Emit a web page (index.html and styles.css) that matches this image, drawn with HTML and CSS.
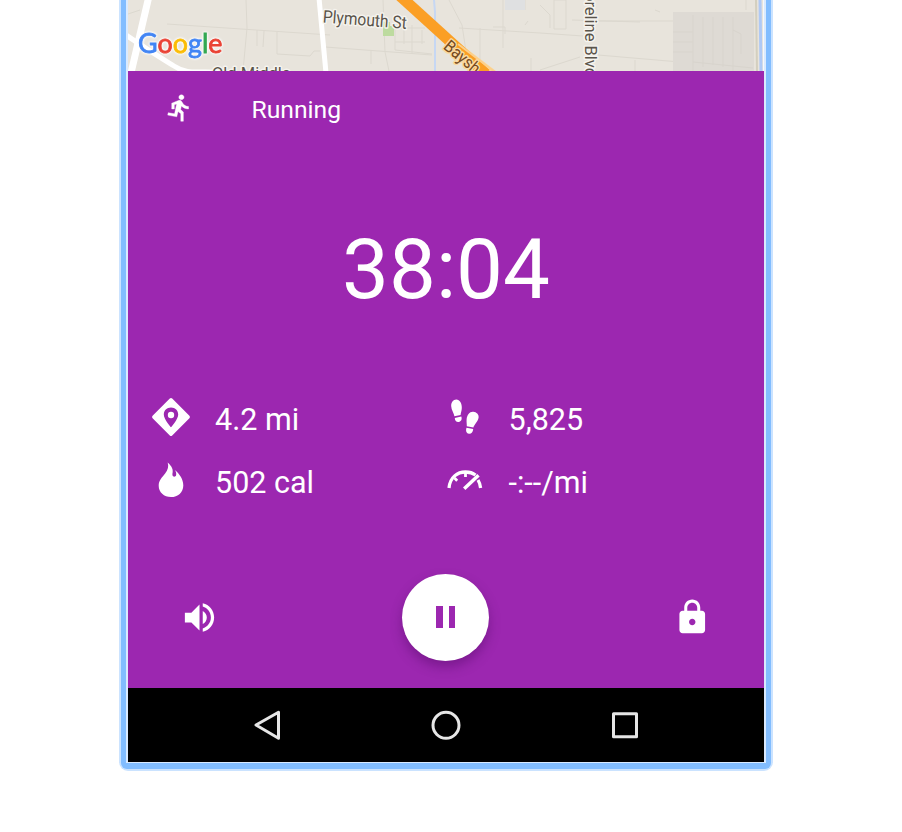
FILE: index.html
```html
<!DOCTYPE html>
<html lang="en">
<head>
<meta charset="utf-8">
<title>Running</title>
<link rel="stylesheet" href="styles.css">
</head>
<body>
<main class="frame">
  <div class="screen">
    <svg class="map" viewBox="128 0 636 71" width="636" height="71">
      <rect x="128" width="636" height="71" fill="#e8e4dc"/>
      <g fill="none" stroke="#dcd8cf" stroke-width="1">
        <path d="M167 24L330 35M246 0L247 28L243 71M257 30v16M264 31l-1 16M277 32v22l33 2 4-5h6M128 14l12-4M325 47L432 55M371 50v14M383 0l2 52 4 19M395 28h30M395 28v22l37 4M412 25v28M404 28v16M422 30v14M395 42h30"/>
        <path d="M449 0L462 25L469 71M459 28L540 33M480 28v32M503 0v48M525 0v10M540 33L583 36M598 21H673M572 20L640 22M540 70L580 57M598 55L680 62M635 60v11M531 58v13M540 5l10 10v13"/>
        <path d="M493 27h12v7M554 0h12v29h-12zM525 25l3-4M655 10l5 2M746 0v10"/>
      </g>
      <path d="M673 12h81v59h-81z" fill="#dedad4"/>
      <path d="M673 32h20M673 42h20M673 52h20M693 15v56M703 17v50M713 17v48M723 17v50M733 17v54M693 62l60 6M733 30l8 4v20" fill="none" stroke="#d8d4cd"/>
      <path d="M505 0h20v10h-20z" fill="#dfe0e1"/>
      <path d="M383 22h7v4h4v10h-11z" fill="#bddb9f"/>
      <path d="M434 0l1 12v59" fill="none" stroke="#c6d7f3" stroke-width="2"/>
      <path d="M756 0L757 71" stroke="#d3cfbf" stroke-width="2"/>
      <path d="M760 0L761 71" stroke="#afc9f5" stroke-width="3"/>
      <path d="M763.5 0v71" stroke="#f7f8fa"/>
      <g fill="none" stroke="#fff">
        <path d="M149 -4L131 73" stroke-width="7"/>
        <path d="M126 35C145 48 158 56 174 66S197 70 226 73" stroke-width="5"/>
        <path d="M319 -2L326 73" stroke-width="5"/>
      </g>
      <path d="M450 36L496 71L470 71L444 44z" fill="#fbd9a0"/>
      <path d="M400 -4L486 74" stroke="#fb9f25" stroke-width="11"/>
      <path class="road-edge" d="M458 44L495 72"/>
      <g class="road-label">
        <text transform="translate(322.5 22.500) rotate(4.3)" font-size="17.5" textLength="84" lengthAdjust="spacingAndGlyphs">Plymouth St</text>
        <text transform="translate(584.5 -8) rotate(90)" font-size="17" textLength="85" lengthAdjust="spacingAndGlyphs">oreline Blvd</text>
        <text x="212" y="78.500" font-size="16.500">Old Middle</text>
        <text class="highway" transform="translate(442.500 48) rotate(40)" font-size="17" textLength="42" lengthAdjust="spacingAndGlyphs">Baysh</text>
      </g>
      <text class="google" transform="translate(138 53) scale(.975 1)"><tspan class="blue">G</tspan><tspan class="red">o</tspan><tspan class="yellow">o</tspan><tspan class="blue">g</tspan><tspan class="green">l</tspan><tspan class="red">e</tspan></text>
    </svg>

    <section class="workout">
      <header class="activity">
        <svg class="run" viewBox="0 0 24 24" preserveAspectRatio="none"><path d="M13.49 5.48c1.1 0 2-.9 2-2s-.9-2-2-2-2 .9-2 2 .9 2 2 2zm-3.6 13.9l1-4.4 2.1 2v6h2v-7.5l-2.1-2 .6-3c1.3 1.5 3.3 2.5 5.5 2.5v-2c-1.9 0-3.5-1-4.3-2.4l-1-1.6c-.4-.6-1-1-1.7-1-.3 0-.5.1-.8.1l-5.2 2.2v4.7h2v-3.4l1.8-.7-1.6 8.1-4.900-1-.4 2 7 1.400z"/></svg>
        <span class="activity-name">Running</span>
      </header>

      <div class="timer">38:04</div>

      <div class="stats">
        <div class="stat">
          <svg class="stat-icon" viewBox="0 0 40 40"><path fill-rule="evenodd" d="M18.8 1.6q1.2-1.2 2.4 0l17.2 17.2q1.2 1.2 0 2.4L21.200 38.400q-1.200 1.200-2.400 0L1.600 21.200q-1.200-1.200 0-2.400zM20 10.500c-4.300 0-7.200 3.200-7.200 7 0 5 7.200 12.800 7.200 12.800s7.200-7.800 7.200-12.800c0-3.800-2.900-7-7.200-7z"/><circle cx="20" cy="18" r="3.200"/></svg>
          <span>4.2 mi</span>
        </div>
        <div class="stat">
          <svg class="stat-icon" viewBox="0 0 40 40"><path d="M11.300 2.500c3.400 0 5.700 4 5.500 8.400-.1 2.800-1 4.700-1.200 7.100l-6.200 1.300C9 16 6.300 13 6.200 9.200 6.100 5.500 8 2.500 11.300 2.500zM9.800 20.900l6.500-1.300c1 2.900-.3 5-2.500 5.400-2.300.4-3.900-1.300-4-4.100zM28.300 14.800c-3.500-.4-6.400 3.100-6.700 7.600-.2 2.600.3 4.400.2 6.900l6.600 1.300c.6-2.800 4.600-5.900 5.200-10.100.4-3-2.100-5.400-5.300-5.700zM21.500 30.800l6.700 1.300c-.2 3.400-2 5-4.300 4.700-2.300-.3-3.500-2.600-2.400-6z"/></svg>
          <span>5,825</span>
        </div>
        <div class="stat lower">
          <svg class="stat-icon" viewBox="0 0 40 40"><path d="M16.700 1.500c4.500 4 5.800 7.300 4.700 11.500-.3 3 3 3.500 3.700 1.200.4-1.700-.1-3.500-1.300-5.200 5 4 8.600 9.700 8.500 15.400C32.200 31.500 27 36 20 36S7.700 31.300 7.700 24.700c0-5.500 3.500-8.300 6.600-12.500 2.600-3.500 3.600-6.600 2.400-10.700z"/></svg>
          <span>502 cal</span>
        </div>
        <div class="stat lower">
          <svg class="stat-icon" viewBox="0 0 40 40"><g fill="none" stroke="#fff" stroke-width="3.300"><path d="M4 27C5 16 12.500 11 20.500 11c4.300 0 7.500 1.100 10 3M33 19c1.500 2.400 2.300 5 2.600 8"/><path d="M9.500 17l2.700 2.700M20.500 11v5" stroke-width="2.800"/><path d="M19.200 27.800L33.500 14.200" stroke-width="3.500"/></g></svg>
          <span>-:--/mi</span>
        </div>
      </div>

      <div class="controls">
        <svg class="volume" viewBox="0 0 24 24"><path d="M3 9v6h4l5 5V4L7 9H3zm13.500 3c0-1.770-1.020-3.290-2.500-4.030v8.050c1.480-.73 2.500-2.250 2.500-4.020zM14 3.230v2.060c2.890.86 5 3.540 5 6.710s-2.110 5.850-5 6.710v2.060c4.010-.91 7-4.490 7-8.770s-2.990-7.860-7-8.770z"/></svg>
        <button class="pause" aria-label="Pause"><i></i><i></i></button>
        <svg class="lock" viewBox="0 0 24 24"><path d="M18 8h-1V6c0-2.760-2.240-5-5-5S7 3.240 7 6v2H6c-1.100 0-2 .9-2 2v10c0 1.100.9 2 2 2h12c1.100 0 2-.9 2-2V10c0-1.100-.9-2-2-2zm-6 9c-1.100 0-2-.9-2-2s.9-2 2-2 2 .9 2 2-.9 2-2 2zm3.100-9H8.900V6c0-1.710 1.390-3.100 3.100-3.100s3.100 1.390 3.100 3.100v2z"/></svg>
      </div>
    </section>

    <nav class="navbar">
      <svg viewBox="0 0 32 32"><path d="M5 16L27.500 3.200V29.300z"/></svg>
      <svg viewBox="0 0 32 32"><circle cx="16" cy="16.300" r="13"/></svg>
      <svg viewBox="0 0 32 32"><rect x="4.500" y="4.800" width="23" height="23"/></svg>
    </nav>
  </div>
</main>
</body>
</html>
```

FILE: styles.css
```css
* { box-sizing: border-box; }

body {
  margin: 0;
  height: 832px;
  overflow: hidden;
  background: #fff;
  font-family: Roboto, "Liberation Sans", sans-serif;
}

svg { display: block; flex: none; }

.frame {
  width: 654px;
  height: 771px;
  margin-left: 119px;
  padding: 0 2px 2px;
  background: #cbe3ff;
  border-radius: 0 0 9px 9px;
}

.screen {
  height: 769px;
  border: solid #82bdff;
  border-width: 0 5px 6px;
  border-radius: 0 0 6px 6px;
  padding: 0 2px 1px;
  background: #d9eaff;
}

.map { overflow: hidden; }

.road-label {
  fill: #5a544a;
  stroke: #f5f3ee;
  stroke-width: 3px;
  stroke-linejoin: round;
  paint-order: stroke;
}

.highway { fill: #754a20; stroke: #fbd9a0; }

.road-edge { fill: none; stroke: #fbd08c; stroke-width: 2px; }

.google {
  font-family: Lato, sans-serif;
  font-size: 27.500px;
  font-weight: 400;
  stroke-width: .8px;
  filter: drop-shadow(0 0 1px #fff) drop-shadow(0 0 1px #fff);
}

.blue { fill: #4285f4; stroke: #4285f4; }
.red { fill: #ea4335; stroke: #ea4335; }
.yellow { fill: #fbbc05; stroke: #fbbc05; }
.green { fill: #34a853; stroke: #34a853; }

.workout {
  height: 617px;
  background: #9c27b0;
  color: #fff;
  fill: #fff;
}

.activity {
  display: flex;
  align-items: center;
  height: 76px;
  padding-left: 35.500px;
}

.run {
  width: 31px;
  height: 29.500px;
  margin-top: -3px;
  stroke: #fff;
  stroke-width: .3px;
}

.activity-name { margin-left: 57px; font-size: 24.700px; }

.timer {
  height: 240px;
  padding-top: 5px;
  line-height: 236px;
  font-size: 83.500px;
  text-align: center;
}

.stats {
  display: grid;
  grid-template-columns: 293.500px 1fr;
  grid-auto-rows: 63px;
  padding-left: 23px;
}

.stat {
  display: flex;
  align-items: center;
  gap: 24px;
  padding-top: 1px;
  font-size: 30.500px;
}

.stat-icon { width: 40px; height: 40px; margin-top: -5px; }

.lower .stat-icon { margin-top: -3px; }

.controls {
  display: flex;
  align-items: center;
  justify-content: space-between;
  height: 87px;
  margin-top: 60.500px;
  padding: 0 52.500px 0 51.500px;
}

.volume { width: 39px; height: 39px; }

.lock { width: 38.500px; height: 38.500px; }

.pause {
  display: flex;
  align-items: center;
  justify-content: center;
  gap: 6px;
  width: 87px;
  height: 87px;
  padding: 0;
  border: 0;
  border-radius: 50%;
  background: #fff;
  box-shadow: 0 6px 12px rgba(60, 0, 80, .35);
}

.pause i { width: 6.500px; height: 22px; background: #9c27b0; }

.navbar {
  display: flex;
  align-items: center;
  justify-content: center;
  gap: 147px;
  height: 74px;
  background: #000;
}

.navbar svg {
  width: 32px;
  height: 32px;
  fill: none;
  stroke: #e6e6e6;
  stroke-width: 3px;
  stroke-linejoin: round;
}
```
